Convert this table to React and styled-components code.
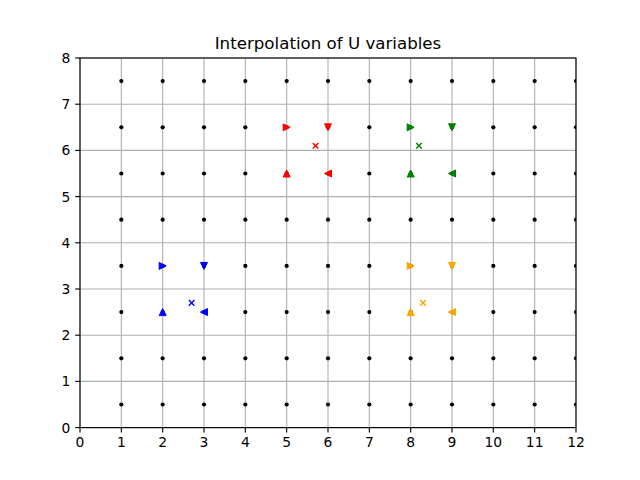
import React from "react";
import styled, { createGlobalStyle } from "styled-components";

const GlobalStyle = createGlobalStyle`
  html, body {
    margin: 0;
    padding: 0;
    background: #ffffff;
  }
  body {
    font-family: "DejaVu Sans", "Liberation Sans", sans-serif;
  }
`;

// axes box in figure pixels (matplotlib default 640x480 figure)
const AX_LEFT = 80;
const AX_WIDTH = 496;
const AX_TOP = 57.6;
const AX_HEIGHT = 369.6;

const sx = (v) => AX_LEFT + (v / 12) * AX_WIDTH;
const sy = (v) => AX_HEIGHT - (v / 8) * AX_HEIGHT;

const TICK = 4.86;
const PAD = 4.86;
const FONT = 13.9;

const groups = [
  { color: "#ff0000", x0: 5, y0: 5.5, cross: [5.7, 6.1] },
  { color: "#008000", x0: 8, y0: 5.5, cross: [8.2, 6.1] },
  { color: "#0000ff", x0: 2, y0: 2.5, cross: [2.7, 2.7] },
  { color: "#ffa500", x0: 8, y0: 2.5, cross: [8.3, 2.7] },
];

const Figure = styled.div`
  width: 640px;
  height: 480px;
  background: #ffffff;
  display: flex;
  flex-direction: column;
  overflow: hidden;
`;

const Title = styled.div`
  box-sizing: border-box;
  height: ${AX_TOP}px;
  width: ${AX_WIDTH}px;
  margin-left: ${AX_LEFT}px;
  padding-top: 33.8px;
  text-align: center;
  font-family: "DejaVu Sans", "Liberation Sans", sans-serif;
  font-size: 16.67px;
  line-height: normal;
  color: #000000;
  white-space: nowrap;
`;

const Chart = styled.svg`
  display: block;
  overflow: visible;
  font-family: "DejaVu Sans", "Liberation Sans", sans-serif;
`;

const S = 7; // triangle size
const h = S / 2;

const Triangle = ({ x, y, dir, color }) => {
  const cx = sx(x);
  const cy = sy(y);
  let pts;
  if (dir === "^") pts = [[0, -h], [-h, h], [h, h]];
  else if (dir === "v") pts = [[0, h], [-h, -h], [h, -h]];
  else if (dir === ">") pts = [[h, 0], [-h, -h], [-h, h]];
  else pts = [[-h, 0], [h, -h], [h, h]];
  return (
    <polygon
      points={pts.map(([a, b]) => `${cx + a},${cy + b}`).join(" ")}
      fill={color}
      stroke={color}
      strokeWidth="1"
      strokeLinejoin="miter"
    />
  );
};

const Cross = ({ x, y, color }) => {
  const cx = sx(x);
  const cy = sy(y);
  const r = 2.8;
  return (
    <path
      d={`M${cx - r} ${cy - r}L${cx + r} ${cy + r}M${cx - r} ${cy + r}L${cx + r} ${cy - r}`}
      stroke={color}
      strokeWidth="1.39"
      fill="none"
    />
  );
};

export default function App() {
  const xs = Array.from({ length: 13 }, (_, i) => i);
  const ys = Array.from({ length: 9 }, (_, i) => i);
  const dots = [];
  for (let i = 1; i <= 12; i++) {
    for (let j = 0; j < 8; j++) dots.push([i, j + 0.5]);
  }

  return (
    <>
      <GlobalStyle />
      <Figure>
        <Title>Interpolation of U variables</Title>
        <Chart width="640" height={480 - AX_TOP} viewBox={`0 0 640 ${480 - AX_TOP}`}>
          <defs>
            <clipPath id="axclip">
              <rect x={AX_LEFT} y="0" width={AX_WIDTH} height={AX_HEIGHT} />
            </clipPath>
          </defs>

          {/* grid */}
          {xs.map((v) => (
            <line key={`gx${v}`} x1={sx(v)} x2={sx(v)} y1="0" y2={AX_HEIGHT} stroke="#b0b0b0" strokeWidth="1.11" />
          ))}
          {ys.map((v) => (
            <line key={`gy${v}`} x1={AX_LEFT} x2={AX_LEFT + AX_WIDTH} y1={sy(v)} y2={sy(v)} stroke="#b0b0b0" strokeWidth="1.11" />
          ))}

          <g clipPath="url(#axclip)">
            {dots.map(([x, y]) => (
              <circle key={`d${x}-${y}`} cx={sx(x)} cy={sy(y)} r="2.1" fill="#000000" />
            ))}
            {groups.map((g, i) => (
              <g key={i}>
                <Triangle x={g.x0} y={g.y0 + 1} dir=">" color={g.color} />
                <Triangle x={g.x0 + 1} y={g.y0 + 1} dir="v" color={g.color} />
                <Triangle x={g.x0} y={g.y0} dir="^" color={g.color} />
                <Triangle x={g.x0 + 1} y={g.y0} dir="<" color={g.color} />
                <Cross x={g.cross[0]} y={g.cross[1]} color={g.color} />
              </g>
            ))}
          </g>

          {/* spines */}
          <rect x={AX_LEFT} y="0" width={AX_WIDTH} height={AX_HEIGHT} fill="none" stroke="#000000" strokeWidth="1.11" />

          {/* x ticks */}
          {xs.map((v) => (
            <g key={`tx${v}`}>
              <line x1={sx(v)} x2={sx(v)} y1={AX_HEIGHT} y2={AX_HEIGHT + TICK} stroke="#000000" strokeWidth="1.11" />
              <text x={sx(v)} y={AX_HEIGHT + TICK + PAD + FONT * 0.729} fontSize={FONT} textAnchor="middle" fill="#000000">
                {v}
              </text>
            </g>
          ))}

          {/* y ticks */}
          {ys.map((v) => (
            <g key={`ty${v}`}>
              <line x1={AX_LEFT - TICK} x2={AX_LEFT} y1={sy(v)} y2={sy(v)} stroke="#000000" strokeWidth="1.11" />
              <text x={AX_LEFT - TICK - PAD} y={sy(v) + FONT * 0.3645} fontSize={FONT} textAnchor="end" fill="#000000">
                {v}
              </text>
            </g>
          ))}
        </Chart>
      </Figure>
    </>
  );
}
